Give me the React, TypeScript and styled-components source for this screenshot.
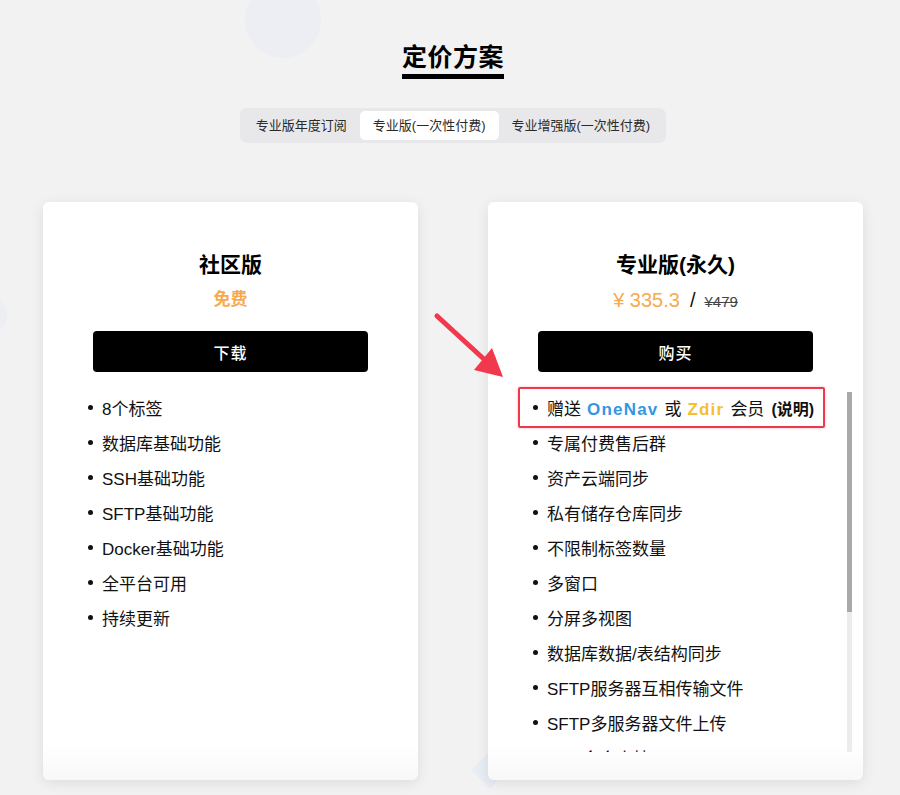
import React from "react";
import styled, { createGlobalStyle } from "styled-components";

const GlobalStyle = createGlobalStyle`
  html, body {
    margin: 0;
    padding: 0;
    background: #f2f2f2;
  }
  body {
    font-family: "Liberation Sans", "Noto Sans CJK SC", sans-serif;
    color: #111;
  }
`;

const Page = styled.div`
  position: relative;
  width: 900px;
  height: 795px;
  overflow: hidden;
  padding-top: 40px;
  box-sizing: border-box;
  background: #f2f2f2;
`;

const Circle = styled.div<{ $x: number; $y: number; $r: number }>`
  position: absolute;
  left: ${(p) => p.$x - p.$r}px;
  top: ${(p) => p.$y - p.$r}px;
  width: ${(p) => p.$r * 2}px;
  height: ${(p) => p.$r * 2}px;
  border-radius: 50%;
  background: #eceef3;
`;

const Diamond = styled.div`
  position: absolute;
  left: 477px;
  top: 757px;
  width: 26px;
  height: 26px;
  transform: rotate(45deg);
  background: #e7ecf5;
`;

const Main = styled.main`
  position: relative;
  z-index: 1;
  width: 820px;
  margin-left: 43px;
  display: flex;
  flex-direction: column;
  align-items: center;
`;

const Heading = styled.h1`
  margin: 0;
  display: inline-block;
  font-size: 25px;
  font-weight: 700;
  line-height: 34px;
  letter-spacing: 0.5px;
  border-bottom: 5px solid #000;
  color: #000;
`;

const Tabs = styled.div`
  margin-top: 29px;
  display: inline-flex;
  padding: 3px;
  background: #e8e8ea;
  border-radius: 7px;
`;

const Tab = styled.div<{ $active?: boolean }>`
  height: 29px;
  line-height: 29px;
  padding: 0 13px;
  font-size: 13px;
  color: #2a2a2a;
  border-radius: 5px;
  background: ${(p) => (p.$active ? "#fff" : "transparent")};
  white-space: nowrap;
`;

const Cards = styled.div`
  margin-top: 59px;
  display: grid;
  grid-template-columns: 375px 375px;
  column-gap: 70px;
`;

const Card = styled.section`
  position: relative;
  height: 578px;
  box-sizing: border-box;
  padding: 48px 11px 0;
  background: linear-gradient(#fff 94%, #f8f8f8);
  border-radius: 6px;
  box-shadow: 0 3px 14px rgba(0, 0, 0, 0.09);
  display: flex;
  flex-direction: column;
`;

const CardTitle = styled.h2`
  margin: 0;
  text-align: center;
  font-size: 21px;
  font-weight: 700;
  line-height: 30px;
  color: #000;
`;

const PriceRow = styled.div`
  margin-top: 8px;
  height: 24px;
  line-height: 24px;
  display: flex;
  justify-content: center;
  align-items: baseline;
`;

const Free = styled.span`
  color: #f8a94c;
  font-size: 17px;
  font-weight: 700;
`;

const Now = styled.span`
  color: #f8a94c;
  font-size: 20px;
`;

const Slash = styled.span`
  color: #111;
  font-size: 20px;
  margin: 0 9px 0 10px;
`;

const Old = styled.span`
  color: #444;
  font-size: 15px;
  text-decoration: line-through;
`;

const ActionButton = styled.button`
  margin: 19px 39px 0;
  height: 41px;
  background: #000;
  color: #fff;
  border: none;
  border-radius: 4px;
  font-family: inherit;
  font-size: 16px;
  font-weight: 500;
  letter-spacing: 1px;
`;

const ListArea = styled.div`
  margin-top: 18px;
  height: 362px;
  display: flex;
`;

const FeatureList = styled.ul`
  flex: 1;
  margin: 0;
  padding: 0 0 0 34px;
  list-style: none;
  overflow: hidden;
`;

const ScrollTrack = styled.div`
  width: 5px;
  margin-top: 2px;
  background: #ececec;
  display: flex;
  flex-direction: column;
`;

const ScrollThumb = styled.div`
  height: 220px;
  background: #a9a9a9;
`;

const Feature = styled.li`
  height: 35px;
  display: flex;
  align-items: center;
  gap: 9px;
  font-size: 17px;
  color: #111;
  white-space: nowrap;

  &::before {
    content: "";
    width: 5px;
    height: 5px;
    border-radius: 50%;
    background: #111;
    flex-shrink: 0;
  }
`;

const Brand = styled.span<{ $color: string }>`
  color: ${(p) => p.$color};
  font-weight: 700;
  letter-spacing: 1.2px;
  margin: 0 6px;
`;

const Note = styled.span`
  font-size: 16px;
  font-weight: 700;
  margin-left: 7px;
`;

const Highlight = styled.div`
  position: absolute;
  left: 30px;
  top: 185px;
  width: 307px;
  height: 41px;
  box-sizing: border-box;
  border: 2.5px solid #f0384c;
  border-radius: 2px;
  box-shadow: 0 0 3px rgba(240, 56, 76, 0.35);
  pointer-events: none;
`;

const Arrow = styled.svg`
  position: absolute;
  left: 430px;
  top: 308px;
  z-index: 2;
`;

const freeFeatures = [
  "8个标签",
  "数据库基础功能",
  "SSH基础功能",
  "SFTP基础功能",
  "Docker基础功能",
  "全平台可用",
  "持续更新",
];

const proFeatures = [
  "专属付费售后群",
  "资产云端同步",
  "私有储存仓库同步",
  "不限制标签数量",
  "多窗口",
  "分屏多视图",
  "数据库数据/表结构同步",
  "SFTP服务器互相传输文件",
  "SFTP多服务器文件上传",
  "SSH命令小抄",
];

export default function App() {
  return (
    <>
      <GlobalStyle />
      <Page>
        <Circle $x={283} $y={20} $r={38} />
        <Circle $x={-12} $y={315} $r={19} />
        <Diamond />
        <Main>
          <Heading>定价方案</Heading>
          <Tabs>
            <Tab>专业版年度订阅</Tab>
            <Tab $active>专业版(一次性付费)</Tab>
            <Tab>专业增强版(一次性付费)</Tab>
          </Tabs>
          <Cards>
            <Card>
              <CardTitle>社区版</CardTitle>
              <PriceRow>
                <Free>免费</Free>
              </PriceRow>
              <ActionButton>下载</ActionButton>
              <ListArea>
                <FeatureList>
                  {freeFeatures.map((f) => (
                    <Feature key={f}>{f}</Feature>
                  ))}
                </FeatureList>
              </ListArea>
            </Card>
            <Card>
              <CardTitle>专业版(永久)</CardTitle>
              <PriceRow>
                <Now>¥ 335.3</Now>
                <Slash>/</Slash>
                <Old>¥479</Old>
              </PriceRow>
              <ActionButton>购买</ActionButton>
              <ListArea>
                <FeatureList>
                  <Feature>
                    <span>
                      赠送
                      <Brand $color="#3596e2">OneNav</Brand>或
                      <Brand $color="#f6c02c">Zdir</Brand>会员
                      <Note>(说明)</Note>
                    </span>
                  </Feature>
                  {proFeatures.map((f) => (
                    <Feature key={f}>{f}</Feature>
                  ))}
                </FeatureList>
                <ScrollTrack>
                  <ScrollThumb />
                </ScrollTrack>
              </ListArea>
              <Highlight />
            </Card>
          </Cards>
        </Main>
        <Arrow width="80" height="75" viewBox="0 0 80 75">
          <line
            x1="7"
            y1="8"
            x2="56"
            y2="53"
            stroke="#f2384c"
            strokeWidth="5"
            strokeLinecap="round"
          />
          <polygon points="73,69 44,62 62,40" fill="#f2384c" />
        </Arrow>
      </Page>
    </>
  );
}
